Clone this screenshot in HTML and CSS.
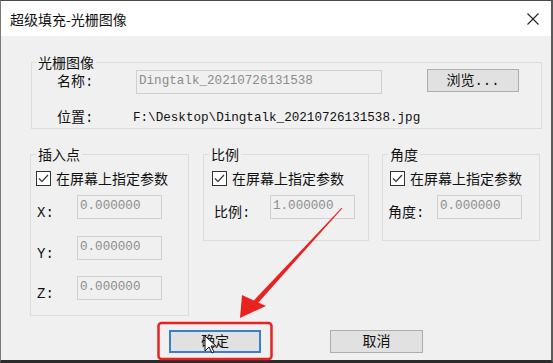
FILE: index.html
```html
<!DOCTYPE html>
<html lang="zh">
<head>
  <meta charset="UTF-8" />
  <meta name="viewport" content="width=device-width, initial-scale=1.0">
  <title>超级填充-光栅图像</title>
  <link rel="stylesheet" href="styles.css">
</head>
<body>
  <div class="window">
    <header class="titlebar">
      <span class="title">超级填充-光栅图像</span>
      <svg class="close" width="12" height="12" viewBox="0 0 12 12">
        <path d="M0.5 0.5 L11.5 11.5 M11.5 0.5 L0.5 11.5" stroke="#222" stroke-width="1.1" fill="none"/>
      </svg>
    </header>

    <div class="dialog">
      <!-- 光栅图像 -->
      <fieldset class="group raster">
        <legend>光栅图像</legend>
        <div class="group-inner">
          <div class="row name-row">
            <span class="label">名称:</span>
            <input class="field name-field" value="Dingtalk_20210726131538" disabled>
            <button class="btn browse">浏览...</button>
          </div>
          <div class="row path-row">
            <span class="label">位置:</span>
            <span class="path">F:\Desktop\Dingtalk_20210726131538.jpg</span>
          </div>
        </div>
      </fieldset>

      <div class="groups">
        <!-- 插入点 -->
        <fieldset class="group insert">
          <legend>插入点</legend>
          <div class="group-inner">
            <label class="check">
              <svg width="15" height="15" viewBox="0 0 15 15"><rect x="0.5" y="0.5" width="14" height="14" fill="#fff" stroke="#333"/><path d="M3 7.5 L6 10.5 L12 4" stroke="#333" stroke-width="1.2" fill="none"/></svg>
              在屏幕上指定参数
            </label>
            <div class="param first">
              <span class="label">X:</span>
              <input class="field" value="0.000000" disabled>
            </div>
            <div class="param second">
              <span class="label">Y:</span>
              <input class="field" value="0.000000" disabled>
            </div>
            <div class="param third">
              <span class="label">Z:</span>
              <input class="field" value="0.000000" disabled>
            </div>
          </div>
        </fieldset>

        <!-- 比例 -->
        <fieldset class="group scale">
          <legend>比例</legend>
          <div class="group-inner">
            <label class="check">
              <svg width="15" height="15" viewBox="0 0 15 15"><rect x="0.5" y="0.5" width="14" height="14" fill="#fff" stroke="#333"/><path d="M3 7.5 L6 10.5 L12 4" stroke="#333" stroke-width="1.2" fill="none"/></svg>
              在屏幕上指定参数
            </label>
            <div class="param first">
              <span class="label">比例:</span>
              <input class="field" value="1.000000" disabled>
            </div>
          </div>
        </fieldset>

        <!-- 角度 -->
        <fieldset class="group angle">
          <legend>角度</legend>
          <div class="group-inner">
            <label class="check">
              <svg width="15" height="15" viewBox="0 0 15 15"><rect x="0.5" y="0.5" width="14" height="14" fill="#fff" stroke="#333"/><path d="M3 7.5 L6 10.5 L12 4" stroke="#333" stroke-width="1.2" fill="none"/></svg>
              在屏幕上指定参数
            </label>
            <div class="param first">
              <span class="label">角度:</span>
              <input class="field" value="0.000000" disabled>
            </div>
          </div>
        </fieldset>
      </div>

      <div class="actions">
        <button class="btn default">确定</button>
        <button class="btn">取消</button>
      </div>
    </div>

    <!-- 标注：红色箭头、框和鼠标 -->
    <svg class="overlay" width="553" height="363" viewBox="0 0 553 363">
      <polygon points="342.4,208.3 341.6,207.7 250.2,304.3 253.8,307.7" fill="#e8231f"/>
      <polygon points="240,318 242,295 266,306" fill="#e8231f"/>
      <rect x="158.5" y="323" width="113" height="36" rx="3" fill="none" stroke="#e8231f" stroke-width="2.5"/>
      <path d="M205 336 L205 351 L209 347 L212 353 L214 352 L211 346 L216 346 Z" fill="#fff" stroke="#111" stroke-width="1"/>
    </svg>
  </div>
</body>
</html>
```

FILE: styles.css
```css
body {
  margin: 0;
  background: #f0f0f0;
  color: #111;
  font-family: "Liberation Mono", "Noto Sans CJK SC", monospace;
  font-size: 14px;
}
.window {
  position: relative;
  box-sizing: border-box;
  width: 553px;
  height: 363px;
  background: #f0f0f0;
  border-top: 1px solid #4a4a4a;
  border-left: 1px solid #7a7a7a;
  border-right: 2px solid #5a5a5a;
  border-bottom: 3px solid #2b2b2b;
}
.titlebar {
  display: flex;
  justify-content: space-between;
  align-items: center;
  height: 35px;
  padding: 0 12px 0 9px;
  background: #fff;
}
.title {
  font-family: "Noto Sans CJK SC", sans-serif;
  font-size: 14px;
  line-height: 20px;
  color: #111;
}
.close {
  display: block;
}

/* Campos deshabilitados */
.field {
  appearance: none;
  box-sizing: border-box;
  width: 85px;
  height: 24px;
  margin: 0;
  padding: 2px 2px 4px;
  border: 1px solid #cfcfcf;
  border-radius: 0;
  background: #f0f0f0;
  color: #8c8c8c;
  font-family: "Liberation Mono", monospace;
  font-size: 12.6px;
  line-height: 16px;
}

/* Grupos */
.group {
  margin: 0;
  padding: 0;
  min-width: 0;
  border: 1px solid #dcdcdc;
}
.group legend {
  margin-left: 5px;
  padding: 0 2px;
  font-family: "Noto Sans CJK SC", sans-serif;
  font-size: 14px;
  line-height: 16px;
}
.raster {
  width: 511px;
  box-sizing: border-box;
  margin: 18px 0 0 30px;
}
.raster legend {
  margin-left: 4px;
}
.raster .group-inner {
  padding-left: 25px;
}
.row {
  display: flex;
  align-items: center;
}
.name-row {
  height: 24px;
}
.name-row .label {
  width: 79px;
}
.name-row .name-field {
  width: 246px;
}
.browse {
  align-self: flex-start;
  margin: -1px 0 0 45px;
  width: 92px;
}
.path-row {
  height: 20px;
  margin-top: 14px;
}
.path-row .label {
  width: 76px;
}
.path {
  font-size: 12.6px;
  line-height: 20px;
}
.label {
  line-height: 20px;
  white-space: nowrap;
}

.groups {
  display: flex;
  align-items: flex-start;
  margin: 17px 0 0 29px;
}
.insert {
  width: 159px;
  box-sizing: border-box;
}
.scale {
  width: 166px;
  box-sizing: border-box;
  margin-left: 14px;
}
.angle {
  width: 158px;
  box-sizing: border-box;
  margin-left: 13px;
}
.insert .group-inner {
  padding: 8px 0 15px 5px;
}
.scale .group-inner {
  padding: 8px 0 21px 8px;
}
.angle .group-inner {
  padding: 8px 0 21px 7px;
}
.check {
  display: flex;
  align-items: center;
  gap: 5px;
  height: 16px;
  font-family: "Noto Sans CJK SC", sans-serif;
  line-height: 16px;
  white-space: nowrap;
}
.check svg {
  display: block;
}
.param {
  display: flex;
  height: 24px;
}
.param .label {
  align-self: flex-end;
  margin-bottom: -4px;
}
.param.first {
  margin-top: 9px;
}
.param.second {
  margin-top: 17px;
}
.param.third {
  margin-top: 16px;
}
.insert .param .label {
  width: 40px;
  margin-left: 1px;
}
.scale .param .label {
  width: 56px;
  margin-left: 2px;
}
.angle .param .label {
  width: 49px;
  margin-left: -2px;
}

/* Botones */
.btn {
  box-sizing: border-box;
  height: 23px;
  padding: 0;
  border: 1px solid #adadad;
  border-radius: 0;
  background: #e1e1e1;
  color: #111;
  font-family: "Liberation Mono", "Noto Sans CJK SC", monospace;
  font-size: 14px;
  line-height: 20px;
}
.actions {
  display: flex;
  gap: 69px;
  margin: 14px 0 0 168px;
}
.actions .btn {
  width: 93px;
}
.actions .btn.default {
  width: 92px;
  border: 2px solid #3a7fcb;
}

.overlay {
  position: absolute;
  top: -1px;
  left: -1px;
  pointer-events: none;
}
```
